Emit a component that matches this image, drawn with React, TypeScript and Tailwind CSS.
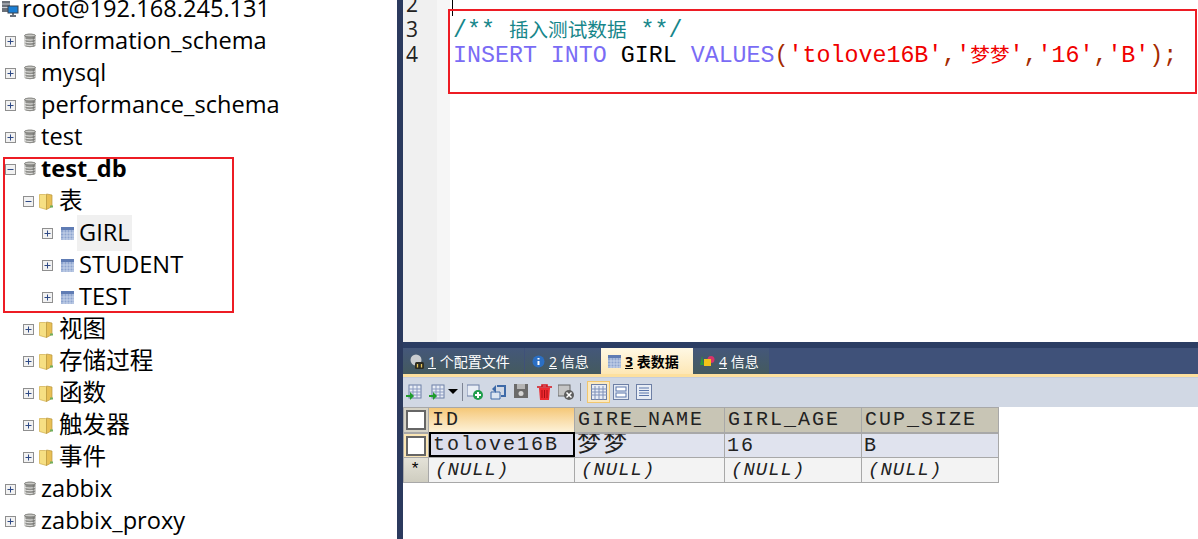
const sans = "font-['Open_Sans','Noto_Sans_CJK_SC',sans-serif]";
const mono = "font-['Liberation_Mono','Noto_Sans_CJK_SC',monospace]";

type TreeRow = {
  label: string;
  depth: 0 | 1 | 2;
  icon: "db" | "folder" | "table";
  open?: boolean;
  bold?: boolean;
  active?: boolean;
};

const treeRows: TreeRow[] = [
  { label: "information_schema", depth: 0, icon: "db" },
  { label: "mysql", depth: 0, icon: "db" },
  { label: "performance_schema", depth: 0, icon: "db" },
  { label: "test", depth: 0, icon: "db" },
  { label: "test_db", depth: 0, icon: "db", open: true, bold: true },
  { label: "表", depth: 1, icon: "folder", open: true },
  { label: "GIRL", depth: 2, icon: "table", active: true },
  { label: "STUDENT", depth: 2, icon: "table" },
  { label: "TEST", depth: 2, icon: "table" },
  { label: "视图", depth: 1, icon: "folder" },
  { label: "存储过程", depth: 1, icon: "folder" },
  { label: "函数", depth: 1, icon: "folder" },
  { label: "触发器", depth: 1, icon: "folder" },
  { label: "事件", depth: 1, icon: "folder" },
  { label: "zabbix", depth: 0, icon: "db" },
  { label: "zabbix_proxy", depth: 0, icon: "db" },
];

function Expander({ open }: { open?: boolean }) {
  return (
    <svg width="11" height="11" viewBox="0 0 11 11" className="shrink-0">
      <rect x="0.5" y="0.5" width="10" height="10" fill="#f2f2f2" stroke="#8f8f8f" />
      <path d="M2.5 5.5h6" stroke="#2f4a86" />
      {!open && <path d="M5.5 2.5v6" stroke="#2f4a86" />}
    </svg>
  );
}

function DbIcon() {
  return (
    <svg width="12" height="15" viewBox="0 0 12 15" className="shrink-0 -translate-y-[1px]">
      <path d="M0.5 2.5C0.5 .3 11.5 .3 11.5 2.5v10c0 2.2-11 2.2-11 0z" fill="#8e8e8a" />
      <path d="M0.5 2.5c0 1.8 11 1.8 11 0s-11-1.8-11 0z" fill="#c9c9c5" stroke="#6f6f6c" strokeWidth="0.6" />
      <path d="M.5 6c2 1.4 9 1.4 11 0M.5 8.7c2 1.4 9 1.4 11 0M.5 11.4c2 1.4 9 1.4 11 0" fill="none" stroke="#e4e4e2" strokeWidth="1" />
      <path d="M1 4v9" stroke="#e9e9e7" strokeWidth="1.2" opacity="0.6" />
      <path d="M9.5 4v9.5" stroke="#5e5e5b" strokeWidth="1.6" opacity="0.4" />
    </svg>
  );
}

function FolderIcon() {
  return (
    <svg width="14" height="17" viewBox="0 0 14 17" className="shrink-0">
      <path d="M0.5 1.5h6l1 1v14l-7-2z" fill="#f6df83" stroke="#d0ae4c" strokeWidth="0.7" />
      <path d="M7.5 1l5.5 1v11.5l-5.5 3z" fill="#e8bf55" stroke="#b8963c" strokeWidth="0.7" />
      <path d="M11 12.5h3v2h-3z" fill="#6faf5f" />
    </svg>
  );
}

function TableIcon({ size = 13 }: { size?: number }) {
  return (
    <svg width={size} height={size} viewBox="0 0 13 13" className="shrink-0">
      <rect width="13" height="13" fill="#8da4cf" />
      <rect width="13" height="3" fill="#5f7cb4" />
      <path d="M0 6h13M0 9h13M0 12h13M3 3v10M6 3v10M9 3v10M12 3v10" stroke="#cfdaee" strokeWidth="0.8" />
    </svg>
  );
}

function ServerIcon() {
  return (
    <svg width="18" height="16" viewBox="0 0 18 16" className="shrink-0">
      <rect x="1" y="0" width="8" height="11" fill="#6b7078" />
      <path d="M1 3h8M1 6.5h8" stroke="#c9ccd2" />
      <rect x="7" y="5" width="10" height="7" fill="#1b7fd4" stroke="#39424f" />
      <path d="M12 12v2M9 15h6" stroke="#39424f" strokeWidth="1.4" />
    </svg>
  );
}

function TreePane() {
  return (
    <div className={`relative w-[397px] shrink-0 overflow-hidden bg-white text-[23.6px] text-black ${sans}`}>
      <div className="-mt-[7px] flex h-8 items-center gap-[3px] pl-[1px]">
        <ServerIcon />
        <span className="whitespace-nowrap">root@192.168.245.131</span>
      </div>
      {treeRows.map((row) => (
        <div
          key={row.label}
          className={`flex h-8 items-center ${row.depth === 0 ? "pl-[5px]" : row.depth === 1 ? "pl-[23px]" : "pl-[42px]"}`}
        >
          <Expander open={row.open} />
          <span className={`flex shrink-0 justify-center ${row.depth === 0 ? "ml-[8px] w-[12px]" : row.depth === 1 ? "ml-[5px] w-[14px]" : "ml-[8px] w-[13px]"}`}>
            {row.icon === "db" && <DbIcon />}
            {row.icon === "folder" && <FolderIcon />}
            {row.icon === "table" && <TableIcon />}
          </span>
          <span
            className={`whitespace-nowrap ${row.depth === 0 ? "ml-[5px]" : row.depth === 1 ? "ml-[6px]" : "ml-[3px] px-[2px]"} ${row.bold ? "font-bold" : ""} ${row.active ? "bg-[#f0f0f0]" : ""}`}
          >
            {row.label}
          </span>
        </div>
      ))}
      <div className="absolute left-[3px] top-[157px] h-[156px] w-[231px] border-2 border-[#ed1c24]" />
    </div>
  );
}

function EditorPane() {
  return (
    <div className={`relative flex h-[342px] bg-white text-[23.3px] leading-[25px] ${mono}`}>
      <div className={`w-[34px] shrink-0 bg-[#f0f0f0] pl-[3px] text-[21px] text-[#222] ${sans}`}>
        <div className="-mt-[8px] h-[25px]">2</div>
        <div className="h-[25px]">3</div>
        <div className="h-[25px]">4</div>
      </div>
      <div className="w-[13px] shrink-0 bg-[#f6f6f6]" />
      <div className="min-w-0 flex-1 pl-[3px] pt-[19px] whitespace-nowrap">
        <div className="h-[25px] text-[#16868a]">
          /** <span className="text-[19.6px]">插入测试数据</span> **/
        </div>
        <div className="h-[25px]">
          <span className="text-[#7a6cf5]">INSERT INTO </span>
          <span className="text-black">GIRL </span>
          <span className="text-[#7a6cf5]">VALUES</span>
          <span className="text-[#a32a00]">(</span>
          <span className="text-[#f00000]">'tolove16B'</span>
          <span className="text-[#a32a00]">,</span>
          <span className="text-[#f00000]">'<span className="text-[19.6px]">梦梦</span>'</span>
          <span className="text-[#a32a00]">,</span>
          <span className="text-[#f00000]">'16'</span>
          <span className="text-[#a32a00]">,</span>
          <span className="text-[#f00000]">'B'</span>
          <span className="text-[#a32a00]">);</span>
        </div>
      </div>
      <div className="absolute left-[49px] top-0 h-[16px] w-px bg-black" />
      <div className="absolute left-[45px] right-[1px] top-[9px] h-[85px] border-2 border-[#ed1c24]" />
    </div>
  );
}

function TabIcon({ kind }: { kind: number }) {
  if (kind === 1) {
    return (
      <svg width="14" height="15" viewBox="0 0 14 15" className="shrink-0">
        <circle cx="6" cy="6" r="5.5" fill="#c9ccd0" />
        <rect x="5" y="8" width="9" height="7" rx="1.5" fill="#2c2c22" />
        <path d="M7.5 10v3.5M11.5 10v3.5" stroke="#e6c65c" strokeWidth="1.3" />
      </svg>
    );
  }
  if (kind === 2) {
    return (
      <svg width="13" height="13" viewBox="0 0 13 13" className="shrink-0">
        <circle cx="6.5" cy="6.5" r="6" fill="#2b6fc4" />
        <path d="M6.5 3v1.5M6.5 6v4" stroke="#fff" strokeWidth="2" />
      </svg>
    );
  }
  if (kind === 3) {
    return <TableIcon size={13} />;
  }
  return (
    <svg width="15" height="13" viewBox="0 0 15 13" className="shrink-0">
      <path d="M0 10L2 1l2 9z" fill="#2d9a3c" />
      <circle cx="11" cy="4.5" r="3.5" fill="#d6336c" />
      <rect x="4" y="4" width="7" height="7" fill="#f2c318" />
    </svg>
  );
}

const tabs = [
  { n: "1", label: "个配置文件", kind: 1, width: "w-[121px]" },
  { n: "2", label: "信息", kind: 2, width: "w-[75px]" },
  { n: "3", label: "表数据", kind: 3, width: "w-[92px]", active: true },
  { n: "4", label: "信息", kind: 4, width: "w-[76px]" },
];

function TabBar() {
  return (
    <div className={`flex h-[26px] bg-[#3f5179] text-[14px] ${sans}`}>
      {tabs.map((tab) => (
        <div
          key={tab.n}
          className={`flex ${tab.width} items-center gap-[4px] pl-[7px] ${
            tab.active
              ? "bg-gradient-to-b from-[#fff8e4] to-[#fde7b5] font-bold text-black"
              : "mr-px bg-gradient-to-b from-[#44577a] to-[#445a5e] text-white"
          }`}
        >
          <TabIcon kind={tab.kind} />
          <span className="whitespace-nowrap">
            <span className="underline">{tab.n}</span> {tab.label}
          </span>
        </div>
      ))}
    </div>
  );
}

function ToolIcon({ kind }: { kind: string }) {
  const grid = (
    <>
      <rect x="3" y="1" width="12" height="13" fill="#e8edf5" stroke="#6d7fa5" />
      <path d="M3 5h12M3 8h12M3 11h12M7 1v13M11 1v13" stroke="#8b9ac0" />
    </>
  );
  switch (kind) {
    case "import":
      return (
        <svg width="16" height="16" viewBox="0 0 16 16" className="shrink-0">
          {grid}
          <path d="M0 11h4V8l4 4-4 4v-3H0z" fill="#1f9d2c" />
        </svg>
      );
    case "add":
      return (
        <svg width="16" height="16" viewBox="0 0 16 16" className="shrink-0">
          <rect x="0" y="1" width="12" height="11" fill="#e8edf5" stroke="#6d7fa5" />
          <circle cx="11" cy="11" r="5" fill="#1f9d4c" />
          <path d="M8 11h6M11 8v6" stroke="#fff" strokeWidth="2" />
        </svg>
      );
    case "undo":
      return (
        <svg width="16" height="16" viewBox="0 0 16 16" className="shrink-0">
          <path d="M7 2h8v10h-4" fill="none" stroke="#3e6aa8" strokeWidth="2" />
          <path d="M1 8h9v7H1z" fill="#dbe5f2" stroke="#3e6aa8" />
          <path d="M6 1L2 5l4 4z" fill="#3e6aa8" />
        </svg>
      );
    case "save":
      return (
        <svg width="15" height="15" viewBox="0 0 15 15" className="shrink-0">
          <rect width="14" height="14" fill="#6b6b6b" />
          <rect x="3" y="0" width="8" height="5" fill="#b5b5b5" />
          <circle cx="7" cy="9.5" r="2.5" fill="#d6d6d6" />
        </svg>
      );
    case "delete":
      return (
        <svg width="15" height="16" viewBox="0 0 15 16" className="shrink-0">
          <path d="M0 3h15M5 3V1h5v2" fill="none" stroke="#d3141c" strokeWidth="1.6" />
          <path d="M2 4h11l-1 12H3z" fill="#ee2a30" />
          <path d="M5 6v8M7.5 6v8M10 6v8" stroke="#a80e14" />
        </svg>
      );
    case "cancel":
      return (
        <svg width="16" height="16" viewBox="0 0 16 16" className="shrink-0">
          <rect x="0" y="1" width="12" height="11" fill="#c5c5c5" stroke="#666" />
          <circle cx="11" cy="11" r="5" fill="#5e5e5e" />
          <path d="M8.5 8.5l5 5M13.5 8.5l-5 5" stroke="#fff" strokeWidth="1.5" />
        </svg>
      );
    case "viewGrid":
      return (
        <svg width="16" height="16" viewBox="0 0 16 16">
          <rect x="0.5" y="0.5" width="15" height="15" fill="#e8edf5" stroke="#6d7fa5" />
          <path d="M0 5h16M0 8h16M0 11h16M4 2v14M8 2v14M12 2v14" stroke="#7f90b8" />
        </svg>
      );
    case "viewForm":
      return (
        <svg width="16" height="16" viewBox="0 0 16 16">
          <rect x="0.5" y="0.5" width="15" height="15" fill="#e8edf5" stroke="#6d7fa5" />
          <rect x="3" y="3" width="10" height="4" fill="#fff" stroke="#5b76ab" />
          <rect x="3" y="9" width="10" height="4" fill="#fff" stroke="#5b76ab" />
        </svg>
      );
    default:
      return (
        <svg width="16" height="16" viewBox="0 0 16 16">
          <rect x="0.5" y="0.5" width="15" height="15" fill="#e8edf5" stroke="#6d7fa5" />
          <path d="M3 4h10M3 6.5h10M3 9h10M3 11.5h10" stroke="#5b76ab" />
        </svg>
      );
  }
}

function Toolbar() {
  return (
    <div className="flex h-[29px] items-center bg-[#d1d8e4] pb-[2px] pl-[3px]">
      <ToolIcon kind="import" />
      <span className="ml-[7px]"><ToolIcon kind="import" /></span>
      <span className="ml-[3px] h-0 w-0 border-x-[5px] border-t-[5px] border-x-transparent border-t-black" />
      <span className="mx-[4px] h-[18px] w-px bg-[#7d8494]" />
      <ToolIcon kind="add" />
      <span className="ml-[7px]"><ToolIcon kind="undo" /></span>
      <span className="ml-[8px]"><ToolIcon kind="save" /></span>
      <span className="ml-[8px]"><ToolIcon kind="delete" /></span>
      <span className="ml-[6px]"><ToolIcon kind="cancel" /></span>
      <span className="mx-[6px] h-[18px] w-px bg-[#7d8494]" />
      <span className="flex h-[22px] w-[23px] items-center justify-center border border-[#f2c76e] bg-[#fbe9c0]">
        <ToolIcon kind="viewGrid" />
      </span>
      <span className="ml-[3px]"><ToolIcon kind="viewForm" /></span>
      <span className="ml-[7px]"><ToolIcon kind="viewText" /></span>
    </div>
  );
}

const headers = ["ID", "GIRE_NAME", "GIRL_AGE", "CUP_SIZE"];
const dataRow = ["tolove16B", "梦梦", "16", "B"];

function RowHeader({ checked, star }: { checked?: boolean; star?: boolean }) {
  if (star) {
    return (
      <div className="flex h-full items-start justify-center bg-gradient-to-b from-[#e4e2d8] to-[#cfcdc0] pt-[2px] text-[17px] leading-[20px] text-black">*</div>
    );
  }
  return (
    <div className={`flex h-full items-center justify-center ${checked ? "bg-[#fbe6b5]" : "bg-[#d6d3c6]"}`}>
      <span className="h-[20px] w-[20px] border-[2px] border-[#666] bg-white" />
    </div>
  );
}

function DataGrid() {
  return (
    <div className={`grid w-[596px] grid-cols-[26px_146px_150px_137px_137px] grid-rows-[25px_25px_25px] border-b border-[#a8a8a8] bg-white text-[20px] tracking-[2px] ${mono}`}>
      <div className="border border-[#a8a8a8] border-b-0"><RowHeader /></div>
      {headers.map((title, i) => (
        <div
          key={title}
          className={`flex items-center overflow-hidden whitespace-nowrap border-r border-t border-[#a8a8a8] pl-[3px] text-[#222] ${i === 0 ? "bg-gradient-to-b from-[#f5c878] to-[#fdf2d8]" : "bg-[#c8c5b5]"}`}
        >
          {title}
        </div>
      ))}
      <div className="border border-b-0 border-t-2 border-[#a8a8a8]"><RowHeader checked /></div>
      {dataRow.map((value, i) => (
        <div
          key={value}
          className={`flex overflow-hidden whitespace-nowrap pl-[2px] text-[#222] ${value === "梦梦" ? "items-start text-[24px] leading-[22px]" : "items-center"} ${i === 0 ? "border-2 border-black bg-[#dddeec]" : "border-r border-t-2 border-[#a8a8a8] bg-[#e0e3ee]"}`}
        >
          {value}
        </div>
      ))}
      <div className="border border-[#a8a8a8] border-b-0"><RowHeader star /></div>
      {dataRow.map((value) => (
        <div
          key={value}
          className="flex items-center overflow-hidden whitespace-nowrap border-r border-t border-[#a8a8a8] bg-[#f3f3f3] pl-[6px] text-[19px] italic tracking-[1px] text-[#222]"
        >
          (NULL)
        </div>
      ))}
    </div>
  );
}

function ResultPane() {
  return (
    <div className="min-h-0 flex-1 bg-white">
      <div className="h-[6px] bg-[#2b3d63]" />
      <TabBar />
      <div className="h-[3px] bg-[#fde09e]" />
      <div className="h-px bg-[#c5cddc]" />
      <Toolbar />
      <DataGrid />
    </div>
  );
}

export default function App() {
  return (
    <div className="flex h-[539px] w-[1198px] overflow-hidden bg-white">
      <TreePane />
      <div className="w-[6px] shrink-0 bg-[#2b3a5e]" />
      <div className="flex min-w-0 flex-1 flex-col">
        <EditorPane />
        <ResultPane />
      </div>
    </div>
  );
}
